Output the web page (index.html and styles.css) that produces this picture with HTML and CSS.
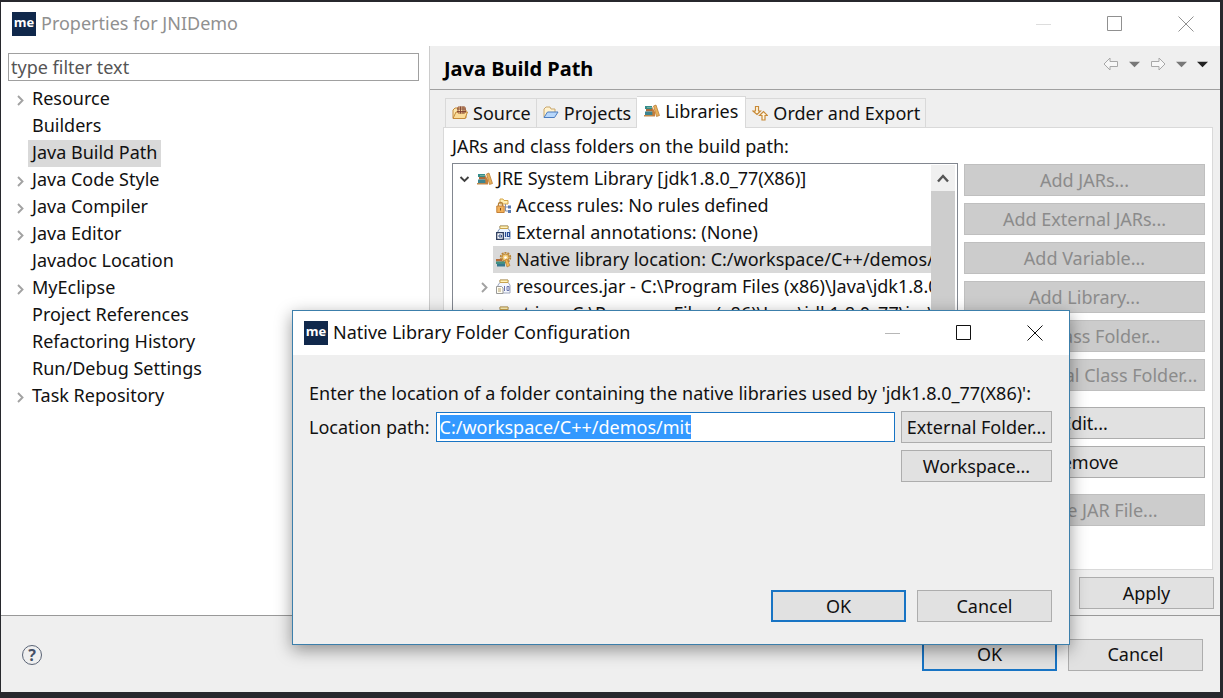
FILE: index.html
```html
<!DOCTYPE html>
<html lang="en">
<head>
<meta charset="utf-8">
<title>Properties for JNIDemo</title>
<link rel="stylesheet" href="styles.css">
</head>
<body>
<svg class="defs" aria-hidden="true">
  <symbol id="i-min" viewBox="0 0 16 16"><path d="M0 8.500H15" fill="none" stroke="currentColor" opacity=".3"/></symbol>
  <symbol id="i-max" viewBox="0 0 16 16"><path d="M.5 .5H14.500V14.500H.5Z" fill="none" stroke="currentColor"/></symbol>
  <symbol id="i-close" viewBox="0 0 16 16"><path d="M.5 .5L15.500 15.500M15.500 .5L.5 15.500" fill="none" stroke="currentColor"/></symbol>
  <symbol id="i-right" viewBox="0 0 12 12"><path d="M4 2L8.500 6.500L4 11" fill="none" stroke="#a2a2a2" stroke-width="1.900"/></symbol>
  <symbol id="i-down" viewBox="0 0 12 12"><path d="M1.500 4L5.500 8L9.500 4" fill="none" stroke="#404040" stroke-width="1.900"/></symbol>
  <symbol id="i-books" viewBox="0 0 16 16"><path d="M1 3H8V6H1Z" fill="#368c8a"/><path d="M3 4.500H8" stroke="#6fb0a2"/><path d="M2 6H9V8.500H2Z" fill="#a86b3c"/><path d="M1 8.500H10V12H1Z" fill="#3d8490"/><path d="M0 12H11V13.500H0Z" fill="#c08a4c"/><path d="M8 3.500L11 9V13H8.500Z" fill="#c57f3c"/><path d="M9.500 3L12 2L15.500 12.500L12.500 13.500Z" fill="#e8b25c" stroke="#b4742b" stroke-width=".7"/></symbol>
  <symbol id="i-source" viewBox="0 0 16 16"><path d="M1 13V5L3 3H6L7 5H14V13Z" fill="#fbe6ae" stroke="#c48a3a"/><path d="M1 13.500L4 7H15.500L13 13.500Z" fill="#fbdc98" stroke="#c48a3a"/><path d="M6 2H13V8H6Z" fill="#f8dca6" stroke="#9c5b36"/><path d="M8.500 1.500V8.500M11 1.500V8.500M5 4H14M5 6.500H14" stroke="#7e3f30" stroke-width=".9"/></symbol>
  <symbol id="i-projects" viewBox="0 0 16 16"><path d="M1 12V4L3 2H7L8 4H12V7" fill="#fff2cf" stroke="#c9a66b"/><path d="M1 12.500L4.500 7H15L11.500 12.500Z" fill="#b7d7fb" stroke="#4d7dbe"/></symbol>
  <symbol id="i-order" viewBox="0 0 16 16"><path d="M3.500 1.500H6.500V6H8.500L5 9.500L1 6H3.500Z" fill="#fff7e3" stroke="#c88a38" stroke-width="1.200"/><path d="M10 15V10.500H7.500L11.500 6.500L15.500 10.500H13V15Z" fill="#fff7e3" stroke="#c88a38" stroke-width="1.200"/></symbol>
  <symbol id="i-rules" viewBox="0 0 16 16"><path d="M4 5V1H7L8 2.500H12V6H4Z" fill="#fff0b5" stroke="#d6a546"/><path d="M2.500 8V6C2.500 4 6.500 4 6.500 6V8" fill="none" stroke="#b3813c" stroke-width="1.300"/><path d="M.8 8H8.200V14.500H.8Z" fill="#f2b15a" stroke="#c38138"/><path d="M4.500 10V12.500" stroke="#7c4f22"/><path d="M9.500 6V13H12M9.500 9H12" fill="none" stroke="#8791a8"/><path d="M12 7.500H15V10.500H12ZM12 12H15V15H12Z" fill="#587ab2"/></symbol>
  <symbol id="i-jar" viewBox="0 0 16 16"><path d="M4 1H12V3.500L14 6V14H2V6L4 3.500Z" fill="#f4f7ff" stroke="#9fa8bd"/><path d="M4 1H12V3.500H4Z" fill="#fff3bd" stroke="#c8a350"/><path d="M.5 7.500H5.500L7 9V14.500H.5Z" fill="#fffdf2" stroke="#999" /><path d="M2 10H5M2 12H5" stroke="#b6a16d"/><path d="M8.500 7V12M11 7.500V11.500H13V7.500Z" fill="none" stroke="#6b75ad"/></symbol>
  <symbol id="i-annot" viewBox="0 0 16 16"><path d="M4 1H12V3.500L14 6V14H2V6L4 3.500Z" fill="#edf5ff" stroke="#7d94b5"/><path d="M4 1H12V3.500H4Z" fill="#fff3bd" stroke="#c8a350"/><path d="M.7 7.700H7.300V14.300H.7Z" fill="#fff" stroke="#2b3c5e" stroke-width="1.300"/><path d="M5 12H3V10H5.500V12.500" fill="none" stroke="#344f82"/><path d="M9.500 7V12M11.500 7.500V11.500H13.500V7.500Z" fill="none" stroke="#244a94" stroke-width="1.200"/></symbol>
  <symbol id="i-native" viewBox="0 0 16 16"><circle cx="9.500" cy="5.500" r="4.800" fill="none" stroke="#ba8331" stroke-width="1.800" stroke-dasharray="2 1"/><circle cx="9.500" cy="5.500" r="3.500" fill="#f3cd78" stroke="#c08a39"/><circle cx="9.500" cy="5.500" r="1.300" fill="#fff"/><path d="M0 7H6V9.500H0Z" fill="#b36c38"/><path d="M0 9.500H9V12H0Z" fill="#429083"/><path d="M1 12H9V14.500H1Z" fill="#35788f"/><path d="M9 8L11 7L14 13.500L11 15Z" fill="#efb854" stroke="#ad7131" stroke-width=".6"/></symbol>
  <symbol id="i-back" viewBox="0 0 16 16"><path d="M1 8L7 2V5.500H14.500V10.500H7V14Z" fill="#f7f7f7" stroke="#a8a8a8"/></symbol>
  <symbol id="i-tri" viewBox="0 0 12 12"><path d="M0 3H12L6 9Z" fill="currentColor"/></symbol>
  <symbol id="i-up" viewBox="0 0 12 12"><path d="M1 9.500L6 4L11 9.500" fill="none" stroke="#555" stroke-width="2.400"/></symbol>
</svg>

<main class="window">
  <header class="titlebar inactive">
    <span class="logo">me</span>
    <h1 class="title">Properties for JNIDemo</h1>
    <div class="controls">
      <button aria-label="Minimize"><svg><use href="#i-min"/></svg></button>
      <button aria-label="Maximize"><svg><use href="#i-max"/></svg></button>
      <button aria-label="Close"><svg><use href="#i-close"/></svg></button>
    </div>
  </header>

  <div class="columns">
    <nav class="sidebar">
      <input class="filter" type="text" placeholder="type filter text" aria-label="Filter">
      <ul class="tree">
        <li><svg class="arrow"><use href="#i-right"/></svg><span>Resource</span></li>
        <li><i class="arrow"></i><span>Builders</span></li>
        <li><i class="arrow"></i><span class="selected">Java Build Path</span></li>
        <li><svg class="arrow"><use href="#i-right"/></svg><span>Java Code Style</span></li>
        <li><svg class="arrow"><use href="#i-right"/></svg><span>Java Compiler</span></li>
        <li><svg class="arrow"><use href="#i-right"/></svg><span>Java Editor</span></li>
        <li><i class="arrow"></i><span>Javadoc Location</span></li>
        <li><svg class="arrow"><use href="#i-right"/></svg><span>MyEclipse</span></li>
        <li><i class="arrow"></i><span>Project References</span></li>
        <li><i class="arrow"></i><span>Refactoring History</span></li>
        <li><i class="arrow"></i><span>Run/Debug Settings</span></li>
        <li><svg class="arrow"><use href="#i-right"/></svg><span>Task Repository</span></li>
      </ul>
    </nav>

    <section class="page">
      <div class="page-head">
        <h2>Java Build Path</h2>
        <div class="history">
          <button aria-label="Back"><svg class="icon"><use href="#i-back"/></svg></button>
          <button aria-label="Back history"><svg class="tri"><use href="#i-tri"/></svg></button>
          <button aria-label="Forward"><svg class="icon flip"><use href="#i-back"/></svg></button>
          <button aria-label="Forward history"><svg class="tri"><use href="#i-tri"/></svg></button>
          <button class="menu" aria-label="Menu"><svg class="tri"><use href="#i-tri"/></svg></button>
        </div>
      </div>
      <div class="page-body">
        <div class="tabs" role="tablist">
          <button role="tab"><svg class="icon"><use href="#i-source"/></svg>Source</button>
          <button role="tab"><svg class="icon"><use href="#i-projects"/></svg>Projects</button>
          <button role="tab" class="active" aria-selected="true"><svg class="icon"><use href="#i-books"/></svg>Libraries</button>
          <button role="tab"><svg class="icon"><use href="#i-order"/></svg>Order and Export</button>
        </div>
        <div class="panel">
          <p class="caption">JARs and class folders on the build path:</p>
          <div class="split">
            <div class="list">
              <ul class="entries">
                <li class="root"><svg class="arrow"><use href="#i-down"/></svg><span class="entry"><svg class="icon"><use href="#i-books"/></svg>JRE System Library [jdk1.8.0_77(X86)]</span></li>
                <li><i class="arrow"></i><span class="entry"><svg class="icon"><use href="#i-rules"/></svg>Access rules: No rules defined</span></li>
                <li><i class="arrow"></i><span class="entry"><svg class="icon"><use href="#i-annot"/></svg>External annotations: (None)</span></li>
                <li><i class="arrow"></i><span class="entry selected"><svg class="icon"><use href="#i-native"/></svg>Native library location: C:/workspace/C++/demos/mit</span></li>
                <li><svg class="arrow"><use href="#i-right"/></svg><span class="entry"><svg class="icon"><use href="#i-jar"/></svg>resources.jar - C:\Program Files (x86)\Java\jdk1.8.0_77\jre\lib</span></li>
                <li><svg class="arrow"><use href="#i-right"/></svg><span class="entry"><svg class="icon"><use href="#i-jar"/></svg>rt.jar - C:\Program Files (x86)\Java\jdk1.8.0_77\jre\lib</span></li>
              </ul>
              <div class="scrollbar"><button aria-label="Scroll up"><svg class="arrow"><use href="#i-up"/></svg></button><div class="thumb"></div></div>
            </div>
            <div class="actions">
              <button class="btn" disabled>Add JARs...</button>
              <button class="btn" disabled>Add External JARs...</button>
              <button class="btn" disabled>Add Variable...</button>
              <button class="btn" disabled>Add Library...</button>
              <button class="btn" disabled>Add Class Folder...</button>
              <button class="btn" disabled>Add External Class Folder...</button>
              <button class="btn spaced">Edit...</button>
              <button class="btn">Remove</button>
              <button class="btn spaced" disabled>Migrate JAR File...</button>
            </div>
          </div>
        </div>
        <div class="apply-row"><button class="btn wide">Apply</button></div>
      </div>
    </section>
  </div>

  <footer class="footer">
    <button class="help" aria-label="Help">?</button>
    <div class="footer-buttons">
      <button class="btn wide primary">OK</button>
      <button class="btn wide">Cancel</button>
    </div>
  </footer>
</main>

<section class="dialog" role="dialog" aria-labelledby="dialog-title">
  <header class="titlebar">
    <span class="logo">me</span>
    <h2 class="title" id="dialog-title">Native Library Folder Configuration</h2>
    <div class="controls">
      <button aria-label="Minimize"><svg><use href="#i-min"/></svg></button>
      <button aria-label="Maximize"><svg><use href="#i-max"/></svg></button>
      <button aria-label="Close"><svg><use href="#i-close"/></svg></button>
    </div>
  </header>
  <form class="dialog-body">
    <p>Enter the location of a folder containing the native libraries used by 'jdk1.8.0_77(X86)':</p>
    <div class="fields">
      <label for="path">Location path:</label>
      <input id="path" type="text" value="C:/workspace/C++/demos/mit">
      <div class="browse">
        <button class="btn" type="button">External Folder...</button>
        <button class="btn" type="button">Workspace...</button>
      </div>
    </div>
    <div class="dialog-buttons">
      <button class="btn wide primary" type="button">OK</button>
      <button class="btn wide" type="button">Cancel</button>
    </div>
  </form>
</section>
<script src="main.js"></script>
</body>
</html>
```
FILE: main.js
```js
const path = document.getElementById("path");
path.focus();
path.select();
```
FILE: styles.css
```css
* { box-sizing: border-box; }
body {
  margin: 0;
  min-height: 100vh;
  padding: 2px 3px 6px 1px;
  display: flex;
  position: relative;
  overflow: hidden;
  background: #27282d;
  color: #111;
  font: 18px/27px "Noto Sans", "Open Sans", sans-serif;
}
button, input { font: inherit; color: inherit; }
button { border: 0; padding: 0; background: none; }
h1, h2, p, ul { margin: 0; padding: 0; font-size: inherit; font-weight: normal; }
ul { list-style: none; }
svg { display: block; flex: none; }
.defs { position: absolute; width: 0; height: 0; }
.icon { width: 16px; height: 16px; }
.arrow { width: 12px; height: 12px; flex: none; }

.window { flex: 1; min-width: 0; display: flex; flex-direction: column; background: #efefef; }
.titlebar { display: flex; align-items: center; height: 44px; padding: 0 26px 0 11px; background: #fff; }
.titlebar.inactive { color: #909090; }
.logo {
  width: 24px; height: 24px; margin-right: 5px;
  background: #10284b; color: #fff;
  font: bold 13px/21px "Open Sans", sans-serif; text-align: center;
}
.title { flex: 1; white-space: nowrap; line-height: 26px; padding-bottom: 2px; }
.controls { display: flex; gap: 55px; }
.controls button, .controls svg { width: 16px; height: 16px; }

.columns { flex: 1; display: flex; border-bottom: 1px solid #999; }
.sidebar { width: 429px; flex: none; padding: 7px 10px 0 7px; background: #fff; border-right: 1px solid #ccc; }
.filter { display: block; width: 100%; height: 28px; padding: 0 2px; border: 1px solid #a0a0a0; background: #fff; }
.filter::placeholder { color: #555; opacity: 1; }
.tree { padding: 5px 0 0 6px; }
.tree li { display: flex; align-items: center; height: 27px; white-space: nowrap; }
.tree span { margin-left: 2px; padding: 0 4px; height: 27px; line-height: 25px; }
.selected { background: #d9d9d9; }

.page { flex: 1; min-width: 0; display: flex; flex-direction: column; }
.page-head { display: flex; height: 44px; padding: 0 12px 0 14px; border-bottom: 1px solid #a0a0a0; }
.page-head h2 { flex: 1; line-height: 45px; font-size: 20px; font-weight: bold; color: #000; }
.history { display: flex; align-items: center; gap: 10px; height: 36px; color: #777; }
.history .flip { transform: scaleX(-1); }
.history .menu { color: #222; }
.tri { width: 11px; height: 11px; }
.page-body { flex: 1; display: flex; flex-direction: column; padding: 6px 6px 6px 13px; }
.tabs { display: flex; align-items: flex-end; height: 31px; padding-left: 2px; }
.tabs button { display: flex; align-items: center; gap: 5px; height: 29px; padding: 0 5px 0 6px; border: 1px solid #d9d9d9; border-width: 1px 1px 0 0; background: #f0f0f0; white-space: nowrap; }
.tabs button:first-child { border-left-width: 1px; }
.tabs .active { height: 32px; padding: 0 7px 3px; margin-bottom: -1px; background: #fff; position: relative; }
.panel { flex: 1; display: flex; flex-direction: column; margin-right: 1px; padding: 5px 7px 12px 8px; border: 1px solid #d9d9d9; background: #fff; }
.caption { line-height: 27px; margin-bottom: 3px; }
.split { flex: 1; display: flex; gap: 6px; }
.list { flex: 1; min-width: 0; display: flex; border: 1px solid #828790; padding: 1px 2px 1px 0; }
.entries { flex: 1; width: 0; overflow: hidden; }
.entries li { display: flex; align-items: center; gap: 3px; height: 27px; padding-left: 25px; white-space: nowrap; }
.entries .root { padding-left: 6px; }
.entry { display: flex; align-items: center; gap: 4px; height: 27px; padding-left: 3px; }
.scrollbar { width: 24px; display: flex; flex-direction: column; background: #f0f0f0; }
.scrollbar button { height: 26px; display: flex; align-items: center; justify-content: center; }
.thumb { height: 180px; background: #cdcdcd; }
.actions { width: 241px; flex: none; display: flex; flex-direction: column; gap: 7px; padding-top: 1px; }
.spaced { margin-top: 9px; }
.btn { height: 32px; padding: 0 4px; border: 1px solid #adadad; background: #e1e1e1; white-space: nowrap; }
.btn:disabled { color: #8b8b8b; background: #ccc; border-color: #bfbfbf; }
.btn.wide { width: 135px; }
.btn.primary { border: 2px solid #1874c4; }
.apply-row { display: flex; justify-content: flex-end; padding-top: 7px; }

.footer { display: flex; align-items: center; justify-content: space-between; height: 76px; padding: 1px 17px 0 21px; }
.help { width: 20px; height: 20px; border: 1px solid #596375; border-radius: 50%; color: #455066; font-size: 16px; font-weight: bold; line-height: 18px; }
.footer-buttons, .dialog-buttons { display: flex; gap: 11px; }

.dialog { position: absolute; left: 292px; right: 153px; top: 310px; border: 1px solid #3c7fab; background: #efefef; box-shadow: 0 5px 16px rgba(0, 0, 0, .4); }
.dialog-body { padding: 25px 17px 22px 16px; }
.dialog-body p { white-space: nowrap; margin-bottom: 4px; }
.fields { display: flex; align-items: flex-start; gap: 6px; }
.fields label { line-height: 32px; white-space: nowrap; }
.fields input { flex: 1; min-width: 0; height: 30px; margin-top: 1px; padding: 0 3px; border: 1px solid #1874c4; outline: 0; background: #fff; }
.fields input::selection { background: #3399ff; color: #fff; }
.browse { display: flex; flex-direction: column; gap: 7px; width: 151px; }
.dialog-buttons { justify-content: flex-end; padding-top: 108px; }
```
